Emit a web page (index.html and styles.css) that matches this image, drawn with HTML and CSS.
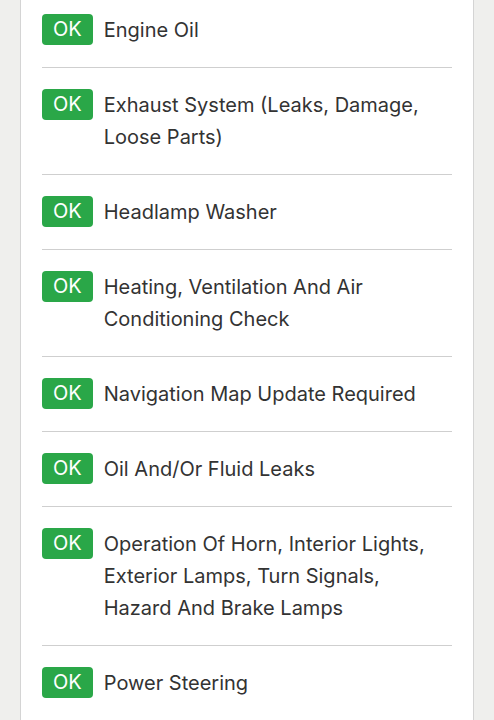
FILE: index.html
```html
<!DOCTYPE html>
<html lang="en">
<head>
    <meta charset="UTF-8">
    <meta name="viewport" content="width=device-width, initial-scale=1.0">
    <title>Inspection Checklist</title>
    <link rel="stylesheet" href="styles.css">
</head>
<body>
    <div class="card">
        <ul class="checklist">
            <li class="item"><span class="badge">OK</span><span class="label">Engine Oil</span></li>
            <li class="item"><span class="badge">OK</span><span class="label">Exhaust System (Leaks, Damage, Loose Parts)</span></li>
            <li class="item"><span class="badge">OK</span><span class="label">Headlamp Washer</span></li>
            <li class="item"><span class="badge">OK</span><span class="label">Heating, Ventilation And Air Conditioning Check</span></li>
            <li class="item"><span class="badge">OK</span><span class="label">Navigation Map Update Required</span></li>
            <li class="item"><span class="badge">OK</span><span class="label">Oil And/Or Fluid Leaks</span></li>
            <li class="item"><span class="badge">OK</span><span class="label">Operation Of Horn, Interior Lights, Exterior Lamps, Turn Signals, Hazard And Brake Lamps</span></li>
            <li class="item"><span class="badge">OK</span><span class="label">Power Steering</span></li>
        </ul>
    </div>
</body>
</html>
```

FILE: styles.css
```css
body {
    margin: 0;
    padding: 0;
    background-color: #efefed;
    font-family: 'Inter', 'Liberation Sans', sans-serif;
    color: #333;
    overflow: hidden;
}
.card {
    margin: -8px 20px 0;
    padding: 0 21px;
    background: white;
    border: 1px solid #d4d4d4;
}
.checklist {
    list-style: none;
    margin: 0;
    padding: 0;
}
.item {
    display: flex;
    align-items: flex-start;
    gap: 11px;
    padding: 21px 0;
    border-bottom: 1px solid #cfcfcf;
    font-size: 20px;
    line-height: 32px;
}
.badge {
    flex: none;
    height: 31px;
    line-height: 31px;
    padding: 0 11px;
    border-radius: 4px;
    background-color: #2aa748;
    color: white;
    font-size: 20px;
}
.label {
    flex: 1;
    padding-right: 6px;
}
```
